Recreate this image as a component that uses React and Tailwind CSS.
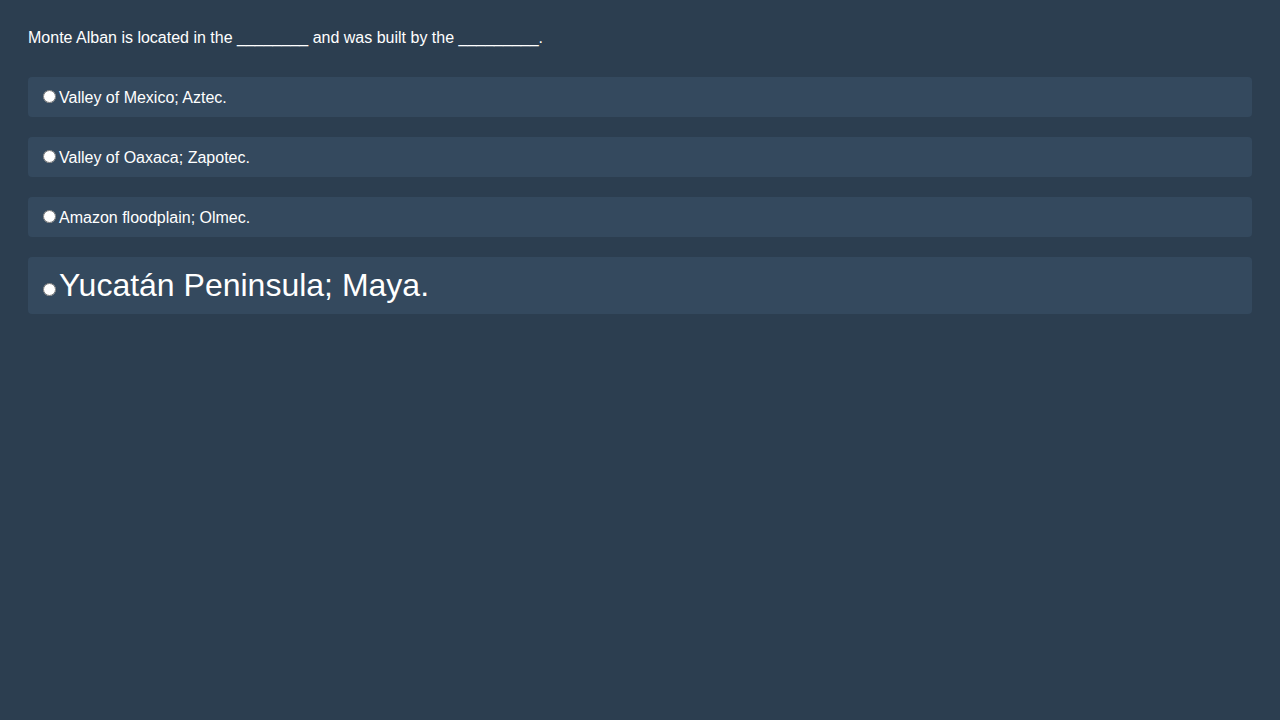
export default function App() {
  const opts = [
    { t: "Valley of Mexico; Aztec.", big: false },
    { t: "Valley of Oaxaca; Zapotec.", big: false },
    { t: "Amazon floodplain; Olmec.", big: false },
    { t: "Yucatán Peninsula; Maya.", big: true },
  ];
  return (
    <div className="min-h-[720px] bg-[#2c3e50] px-[28px] pt-[29px] pb-[28px] text-white" style={{ fontFamily: '"Liberation Sans", Arial, sans-serif' }}>
      <div className="text-[16px] leading-[18px] mb-[30px]">
        Monte Alban is located in the ________ and was built by the _________.
      </div>
      <div className="flex flex-col gap-[20px]">
        {opts.map((o, i) => (
          <label key={i} className={`block rounded-[4px] bg-[#34495e] p-[10px] ${o.big ? "text-[32px] leading-[37px]" : "text-[16px] leading-[19px]"}`}>
            <input type="radio" name="q" className="m-[3px_3px_0_5px]" />
            {o.t}
          </label>
        ))}
      </div>
    </div>
  );
}
